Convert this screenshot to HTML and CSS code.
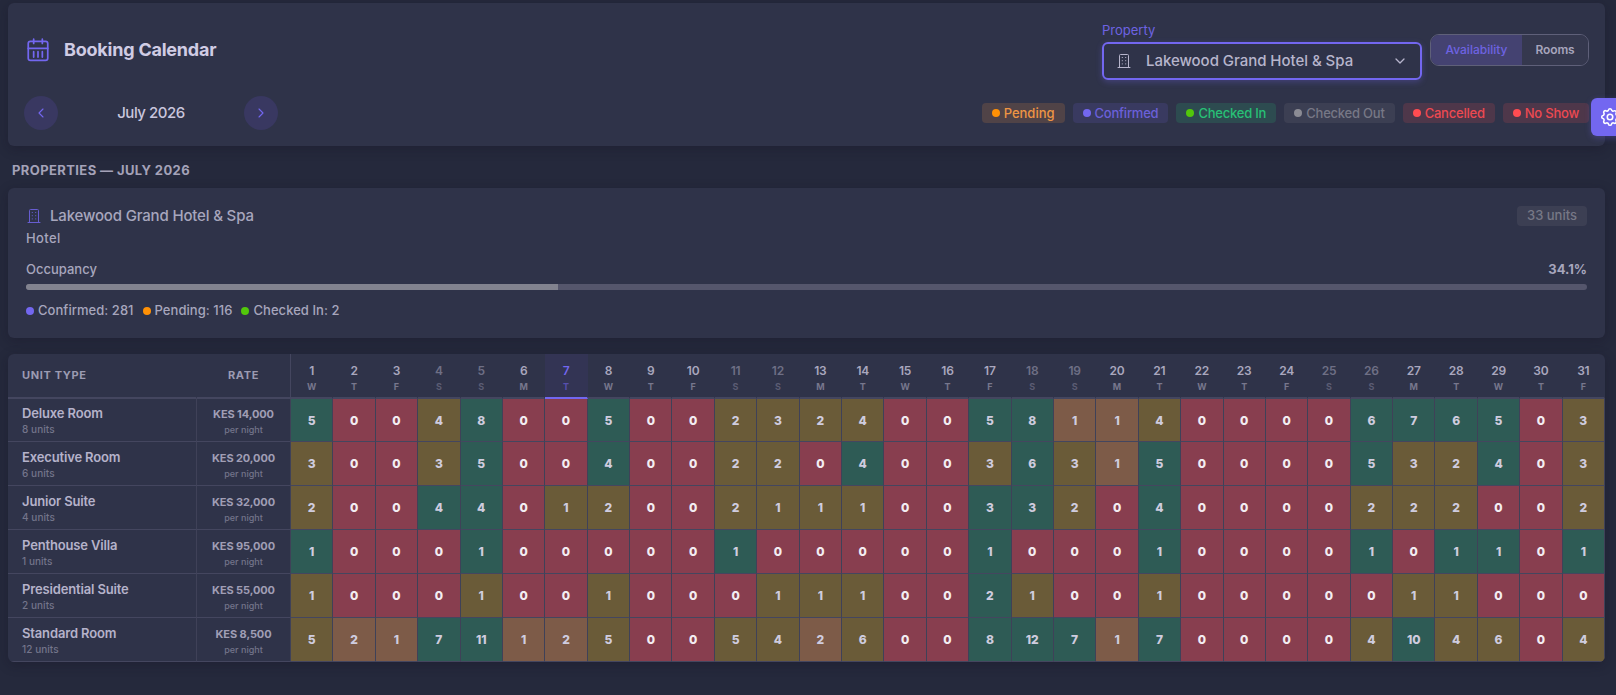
FILE: index.html
```
<!DOCTYPE html>
<html lang="en">

<head>
    <meta charset="UTF-8">
    <meta name="viewport" content="width=device-width, initial-scale=1.0">
    <title>Booking Calendar</title>
    <link rel="stylesheet" href="styles.css">
</head>

<body>
    <header class="card toolbar">
        <div class="toolbar-row">
            <svg class="title-icon" viewBox="0 0 24 24">
                <rect x="3" y="4" width="18" height="17.5" rx="2" />
                <path d="M3 10.5h18M8 2v4M16 2v4M8 13.5v5M12 13.5v5M16 13.5v5" />
            </svg>
            <h1>Booking Calendar</h1>
            <div class="field">
                <label>Property</label>
                <div class="select">
                    <svg class="building" viewBox="0 0 14 16">
                        <path d="M2.5 14.5V2.5a1 1 0 0 1 1-1h7a1 1 0 0 1 1 1v12M1 14.5h12" />
                        <path class="windows" d="M5.3 4v8M8.7 4v8" />
                    </svg>
                    <span>Lakewood Grand Hotel &amp; Spa</span>
                    <svg class="caret" viewBox="0 0 10 6"><path d="M1 1l4 4 4-4" /></svg>
                </div>
            </div>
            <div class="toggle">
                <button class="active">Availability</button>
                <button>Rooms</button>
            </div>
        </div>
        <div class="toolbar-row nav-row">
            <button class="nav-button"><svg viewBox="0 0 6 10"><path d="M5 1L1 5l4 4" /></svg></button>
            <span class="month">July 2026</span>
            <button class="nav-button"><svg viewBox="0 0 6 10"><path d="M1 1l4 4-4 4" /></svg></button>
            <div class="legend">
                <span class="badge pending"><i></i>Pending</span>
                <span class="badge confirmed"><i></i>Confirmed</span>
                <span class="badge checked-in"><i></i>Checked In</span>
                <span class="badge checked-out"><i></i>Checked Out</span>
                <span class="badge cancelled"><i></i>Cancelled</span>
                <span class="badge no-show"><i></i>No Show</span>
            </div>
        </div>
    </header>

    <h2>PROPERTIES — JULY 2026</h2>

    <section class="card property">
        <div class="property-head">
            <svg class="building" viewBox="0 0 14 16">
                <path d="M2.5 14.5V2.5a1 1 0 0 1 1-1h7a1 1 0 0 1 1 1v12M1 14.5h12" />
                <path class="windows" d="M5.3 4v8M8.7 4v8" />
            </svg>
            <span class="property-name">Lakewood Grand Hotel &amp; Spa</span>
            <span class="units-badge">33 units</span>
        </div>
        <div class="property-type">Hotel</div>
        <div class="occupancy">
            <span>Occupancy</span>
            <b>34.1%</b>
        </div>
        <div class="progress"><div class="progress-fill"></div></div>
        <div class="counts">
            <span class="confirmed"><i></i>Confirmed: 281</span>
            <span class="pending"><i></i>Pending: 116</span>
            <span class="checked-in"><i></i>Checked In: 2</span>
        </div>
    </section>

    <main class="card calendar" id="calendar">
        <div class="row head">
            <div class="unit">UNIT TYPE</div>
            <div class="rate">RATE</div>
        </div>
    </main>

    <button class="settings">
        <svg viewBox="0 0 24 24">
            <path d="M10.3 4.3c.4-1.8 3-1.8 3.4 0a1.7 1.7 0 0 0 2.6 1.1c1.5-.9 3.3.8 2.4 2.4a1.7 1.7 0 0 0 1 2.5c1.8.4 1.8 3 0 3.4a1.7 1.7 0 0 0-1 2.6c.9 1.5-.9 3.3-2.4 2.4a1.7 1.7 0 0 0-2.6 1c-.4 1.8-3 1.8-3.4 0a1.7 1.7 0 0 0-2.6-1c-1.5.9-3.3-.9-2.4-2.4a1.7 1.7 0 0 0-1-2.6c-1.8-.4-1.8-3 0-3.4a1.7 1.7 0 0 0 1-2.6c-.9-1.5.9-3.3 2.4-2.4 1 .6 2.3.1 2.6-1z" />
            <circle cx="12" cy="12" r="3" />
        </svg>
    </button>

    <script>
        const today = 7;
        const dayLetters = ['W', 'T', 'F', 'S', 'S', 'M', 'T'];
        const rooms = [
            { name: 'Deluxe Room', units: 8, rate: '14,000', free: [5, 0, 0, 4, 8, 0, 0, 5, 0, 0, 2, 3, 2, 4, 0, 0, 5, 8, 1, 1, 4, 0, 0, 0, 0, 6, 7, 6, 5, 0, 3] },
            { name: 'Executive Room', units: 6, rate: '20,000', free: [3, 0, 0, 3, 5, 0, 0, 4, 0, 0, 2, 2, 0, 4, 0, 0, 3, 6, 3, 1, 5, 0, 0, 0, 0, 5, 3, 2, 4, 0, 3] },
            { name: 'Junior Suite', units: 4, rate: '32,000', free: [2, 0, 0, 4, 4, 0, 1, 2, 0, 0, 2, 1, 1, 1, 0, 0, 3, 3, 2, 0, 4, 0, 0, 0, 0, 2, 2, 2, 0, 0, 2] },
            { name: 'Penthouse Villa', units: 1, rate: '95,000', free: [1, 0, 0, 0, 1, 0, 0, 0, 0, 0, 1, 0, 0, 0, 0, 0, 1, 0, 0, 0, 1, 0, 0, 0, 0, 1, 0, 1, 1, 0, 1] },
            { name: 'Presidential Suite', units: 2, rate: '55,000', free: [1, 0, 0, 0, 1, 0, 0, 1, 0, 0, 0, 1, 1, 1, 0, 0, 2, 1, 0, 0, 1, 0, 0, 0, 0, 0, 1, 1, 0, 0, 0] },
            { name: 'Standard Room', units: 12, rate: '8,500', free: [5, 2, 1, 7, 11, 1, 2, 5, 0, 0, 5, 4, 2, 6, 0, 0, 8, 12, 7, 1, 7, 0, 0, 0, 0, 4, 10, 4, 6, 0, 4] }
        ];

        function level(free, units) {
            if (free === 0) return 'full';
            if (free / units > 0.5) return 'high';
            return free / units >= 0.25 ? 'medium' : 'low';
        }

        const calendar = document.getElementById('calendar');
        const head = calendar.querySelector('.head');

        for (let day = 1; day <= 31; day++) {
            const letter = dayLetters[(day - 1) % 7];
            const cell = document.createElement('div');
            cell.classList.add('day');
            if (letter === 'S') cell.classList.add('weekend');
            if (day === today) cell.classList.add('today');
            cell.innerHTML = `<b>${day}</b><small>${letter}</small>`;
            head.appendChild(cell);
        }

        rooms.forEach(room => {
            const row = document.createElement('div');
            row.classList.add('row');
            row.innerHTML = `
                <div class="unit"><b>${room.name}</b><small>${room.units} units</small></div>
                <div class="rate"><b>KES ${room.rate}</b><small>per night</small></div>
            ` + room.free.map(n => `<div class="cell ${level(n, room.units)}">${n}</div>`).join('');
            calendar.appendChild(row);
        });
    </script>
</body>

</html>
```
FILE: styles.css
```
* {
    box-sizing: border-box;
}

body {
    margin: 0;
    padding: 3px 11px 0 8px;
    height: 695px;
    overflow: hidden;
    background-color: #25293c;
    color: #acabc1;
    font-family: Inter, "Liberation Sans", sans-serif;
    font-size: 13px;
    font-weight: 500;
}

button {
    padding: 0;
    border: none;
    font-family: inherit;
}

svg {
    display: block;
    flex: none;
    fill: none;
    stroke: currentColor;
    stroke-linecap: round;
    stroke-linejoin: round;
}

.card {
    background-color: #2f3349;
    border-radius: 6px;
    box-shadow: 0 3px 12px rgba(19, 17, 32, 0.3);
}

.toolbar {
    height: 143px;
    padding: 18px 16px 16px;
}

.toolbar-row {
    display: flex;
    align-items: center;
    height: 59px;
}

.title-icon {
    width: 26px;
    height: 26px;
    margin: -1px 0 0 1px;
    color: #7367f0;
    stroke-width: 1.6;
}

h1 {
    margin: -2px auto 0 13px;
    color: #d0cce4;
    font-size: 18px;
    font-weight: 700;
    letter-spacing: -0.22px;
}

.field {
    width: 320px;
    height: 59px;
}

.field label {
    display: block;
    height: 21px;
    line-height: 19px;
    color: #6e63e2;
    font-size: 13px;
    font-weight: 400;
}

.select {
    display: flex;
    align-items: center;
    height: 38px;
    padding: 0 15px 1px 13px;
    border: 2px solid #7367f0;
    border-radius: 6px;
    box-shadow: 0 2px 6px rgba(115, 103, 240, 0.3);
    color: #b7b5cc;
    font-size: 15px;
    letter-spacing: -0.04px;
}

.building {
    width: 14px;
    height: 16px;
    stroke-width: 1;
}

.building .windows {
    stroke-dasharray: 1 2.2;
    stroke-linecap: butt;
}

.select span {
    margin: -1px auto 0 15px;
}

.caret {
    width: 10px;
    height: 6px;
    stroke-width: 1.3;
}

.toggle {
    display: flex;
    width: 159px;
    height: 32px;
    margin: -1px 0 0 8px;
    border: 1px solid #5f6079;
    border-radius: 9px;
    overflow: hidden;
}

.toggle button {
    flex: 1;
    padding-bottom: 1px;
    background-color: #35384e;
    color: #a7a5bc;
    font-size: 12px;
    font-weight: 600;
    letter-spacing: -0.1px;
}

.toggle .active {
    flex: none;
    width: 91px;
    background-color: #444271;
    color: #6e63e2;
    font-weight: 500;
    letter-spacing: 0;
}

.nav-row {
    height: 34px;
    margin-top: 16px;
}

.nav-button {
    display: flex;
    align-items: center;
    justify-content: center;
    width: 34px;
    height: 34px;
    border-radius: 50%;
    background-color: #393861;
    color: #7367f0;
}

.nav-button svg {
    width: 6px;
    height: 10px;
    stroke-width: 1.1;
}

.month {
    width: 186px;
    padding-bottom: 2px;
    color: #c9c6dd;
    font-size: 15px;
    letter-spacing: -0.45px;
    text-align: center;
}

.legend {
    display: flex;
    gap: 8px;
    margin-left: auto;
}

.badge {
    display: flex;
    align-items: center;
    height: 20px;
    padding: 0 10px;
    border-radius: 4px;
    font-size: 13px;
    line-height: 19px;
    letter-spacing: -0.22px;
}

.badge.pending {
    letter-spacing: 0;
}

.badge i,
.counts i {
    display: inline-block;
    width: 8px;
    height: 8px;
    margin-right: 4px;
    border-radius: 50%;
    background-color: #7367f0;
}

.pending i {
    background-color: #ff9106;
}

.checked-in i {
    background-color: #52c80b;
}

.badge.pending {
    background-color: #504347;
    color: #ee9544;
}

.badge.confirmed {
    background-color: #393a60;
    color: #6b60d9;
}

.badge.checked-in {
    background-color: #2d4b50;
    color: #28c076;
}

.badge.checked-out {
    background-color: #3c3f53;
    color: #777886;
}

.badge.cancelled,
.badge.no-show {
    background-color: #4e374a;
    color: #ed4951;
}

.badge.checked-out i {
    background-color: #8b8b94;
}

.cancelled i,
.no-show i {
    background-color: #ff4c51;
}

h2 {
    height: 42px;
    margin: 0;
    padding-left: 4px;
    line-height: 48px;
    color: #a4a2b8;
    font-size: 13px;
    font-weight: 700;
    letter-spacing: 0.4px;
}

.property {
    height: 150px;
    padding: 18px;
    color: #a7a6bd;
}

.property-head {
    display: flex;
    align-items: center;
    height: 20px;
}

.property-head .building {
    margin-left: 1px;
    color: #675dd0;
}

.property-name {
    margin: -2px auto 0 9px;
    font-size: 15px;
    letter-spacing: -0.17px;
}

.units-badge {
    padding: 0 10px;
    border-radius: 4px;
    background-color: #3c3f53;
    color: #777886;
    line-height: 19px;
    height: 20px;
}

.property-type {
    margin-top: 2px;
    line-height: 20px;
    letter-spacing: 0.4px;
}

.occupancy {
    display: flex;
    justify-content: space-between;
    height: 35px;
    padding-top: 11px;
    line-height: 20px;
}

.progress {
    height: 6px;
    margin-top: 1px;
    border-radius: 3px;
    background-color: #55566c;
    overflow: hidden;
}

.progress-fill {
    width: 34.1%;
    height: 100%;
    background-color: #82838f;
}

.counts {
    display: flex;
    gap: 9px;
    margin-top: 10px;
    line-height: 20px;
    letter-spacing: 0.05px;
}

.calendar {
    height: 308px;
    margin-top: 16px;
    overflow: hidden;
}

.row {
    display: grid;
    grid-template-columns: 189px 94px repeat(31, 1fr);
    height: 44px;
}

.row.head {
    height: 45px;
}

.head + .row {
    height: 43px;
}

.row > div {
    border-right: 1px solid #3f4158;
    border-bottom: 1px solid #44465f;
}

.row small {
    display: block;
}

.unit {
    padding-left: 14px;
}

.unit b {
    display: block;
    padding-top: 6px;
    color: #b5b2ca;
    font-size: 13px;
    font-weight: 600;
    line-height: 18px;
    letter-spacing: -0.15px;
}

.unit small {
    color: #74758b;
    font-size: 10px;
    line-height: 14px;
    letter-spacing: 0.05px;
}

.head + .row .unit b {
    padding-top: 5px;
}

.rate {
    text-align: center;
}

.rate b {
    display: block;
    padding-top: 9px;
    color: #a09eb5;
    font-size: 11px;
    font-weight: 700;
    line-height: 15px;
    letter-spacing: -0.1px;
}

.head + .row .rate b {
    padding-top: 8px;
}

.rate small {
    color: #74758b;
    font-size: 9px;
    line-height: 16px;
}

.row.head > div {
    border-right-color: transparent;
    border-bottom: 2px solid #44465f;
}

.head .unit,
.head .rate {
    color: #9c9bb2;
    font-size: 11px;
    font-weight: 700;
    line-height: 43px;
    letter-spacing: 0.65px;
}

.row.head .rate {
    border-right-color: #44465f;
}

.day {
    padding-top: 8px;
    text-align: center;
}

.day b {
    display: block;
    color: #a9a7be;
    font-size: 12px;
    font-weight: 600;
    line-height: 17px;
    letter-spacing: -0.2px;
}

.day small {
    color: #77778d;
    font-size: 9px;
    font-weight: 700;
    line-height: 16px;
}

.weekend b {
    color: #6e6f85;
}

.weekend small {
    color: #5b5c73;
}

.row.head .today {
    background-color: #333454;
    border-bottom-color: #7367f0;
}

.today b {
    color: #7367f0;
}

.today small {
    color: #574fae;
}

.cell {
    display: flex;
    align-items: center;
    justify-content: center;
    color: #cfccdf;
    font-size: 12px;
    font-weight: 800;
}

.high {
    background-color: #2e5b55;
}

.medium {
    background-color: #6a5b38;
}

.low {
    background-color: #7d5b48;
}

.full {
    background-color: #883e4f;
    color: #f3edf2;
}

/* stays pinned to the right edge, partly off screen */
.settings {
    position: fixed;
    top: 98px;
    right: -13px;
    display: flex;
    align-items: center;
    width: 38px;
    height: 38px;
    padding-left: 8px;
    border-radius: 6px 0 0 6px;
    background-color: #7367f0;
    box-shadow: 0 2px 6px rgba(115, 103, 240, 0.3);
    color: #fff;
}

.settings svg {
    width: 22px;
    height: 22px;
    stroke-width: 1.7;
}
```
